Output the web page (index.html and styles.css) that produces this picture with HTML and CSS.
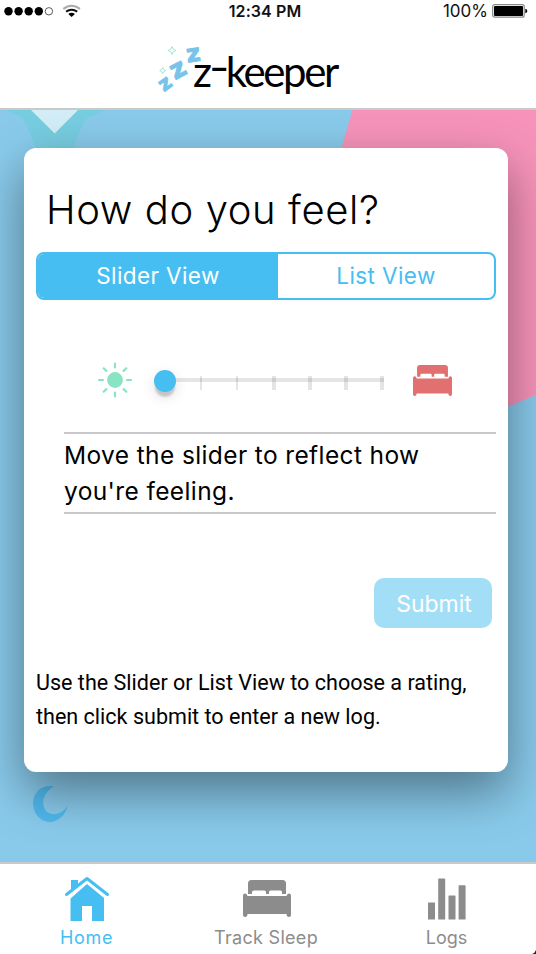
FILE: index.html
```html
<!DOCTYPE html>
<html lang="en">
<head>
<meta charset="utf-8">
<title>z-keeper</title>
<link rel="stylesheet" href="styles.css">
</head>
<body>
<div class="app">
  <header class="header">
    <div class="status">
      <svg class="signal" width="84" height="22" viewBox="0 0 84 22">
        <circle cx="8.5" cy="11.3" r="4.2"/><circle cx="18.6" cy="11.3" r="4.2"/><circle cx="28.7" cy="11.3" r="4.2"/><circle cx="38.8" cy="11.3" r="4.2"/>
        <circle cx="48.9" cy="11.3" r="3.7" fill="#fff" stroke="#333" stroke-width=".8"/>
        <g fill="none" stroke-width="2.1">
          <path d="M63.3 8.8Q71.6 2.8 80 8.8" stroke="#aaa"/>
          <path d="M66.1 11.7Q71.6 7.9 77.2 11.7" stroke="#111"/>
        </g>
        <path d="M68.3 13.9Q71.6 11.7 74.9 13.9L71.6 17Z"/>
      </svg>
      <span class="clock">12:34 PM</span>
      <span class="battery">100%
        <svg width="36" height="14" viewBox="0 0 36 14"><rect x=".7" y=".7" width="31.5" height="12.5" rx="2" fill="#fff" stroke="#888" stroke-width="1.2"/><rect x="2" y="2" width="29" height="10" rx="1"/><path d="M33.3 4.7Q35.3 5 35.3 7Q35.3 9 33.3 9.3Z"/></svg>
      </span>
    </div>
    <div class="brand">
      <svg width="44" height="50" viewBox="0 0 44 50">
        <g class="zs">
          <text transform="translate(7 50) rotate(-36)" font-size="20">z</text>
          <text transform="translate(18 38) rotate(-28)" font-size="26">z</text>
          <text transform="translate(30.500 20.500) rotate(-9)" font-size="24">z</text>
        </g>
        <g fill="none" stroke="#9ee8d4" stroke-width="1">
          <path d="M15 4.5Q15.5 8 19 8.5Q15.500 9 15 12.500Q14.500 9 11 8.500Q14.500 8 15 4.500Z"/>
          <path d="M5.700 25.500Q6.200 28 8.700 28.500Q6.200 29 5.700 31.500Q5.200 29 2.700 28.500Q5.200 28 5.700 25.500Z"/>
        </g>
      </svg>
      <span class="name">z<span class="dash">-</span>keeper</span>
    </div>
  </header>

  <main class="main">
    <svg class="scene" width="536" height="752" viewBox="0 0 536 752">
      <path d="M5 0L23 8Q30 22 37 42H73Q78 20 87 8L105 0Z" fill="#77cde0"/>
      <path d="M31 0H78L54.700 23.500Z" fill="#d3edf7"/>
      <path d="M352.500 0H536V285L508 296.500L300 240L341.500 38Z" fill="#f793ba"/>
      <path d="M54 676.500C41 674 33 683 33 694C34 706 42 712 51 712C60 711 66 703 67.500 696C61 705 53 706 47 702C40 695 43 682 54 676.500Z" fill="#4fb8ee"/>
    </svg>
    <section class="card">
      <h1>How do you feel?</h1>
      <div class="segment">
        <button class="tab tab-on">Slider View</button>
        <button class="tab">List View</button>
      </div>
      <div class="slider">
        <svg width="34" height="36" viewBox="-17 -18 34 36" stroke="#89e4c3" stroke-width="2.200" stroke-linecap="round">
          <circle r="7.900" fill="#89e4c3" stroke="none"/>
          <path d="M0-16.500V-12.500M0 12.500V16.500M-16-0H-12M12 0H16M-11.300-11.700L-8.700-9.100M11.300-11.700L8.700-9.100M-11.300 11.700L-8.700 9.100M11.300 11.700L8.700 9.100"/>
        </svg>
        <div class="range">
          <svg width="232" height="40" viewBox="0 0 232 40">
            <path d="M12 18H231V22H12Z" fill="#e5e5e5"/>
            <path d="M47 16h2v14h-2zM83 16h2v14h-2zM119 16h4v14h-4zM155 16h4v14h-4zM191 16h4v14h-4zM227 16h4v14h-4z" fill="#000" fill-opacity=".1"/>
          </svg>
          <span class="knob"></span>
        </div>
        <svg class="bed" width="39" height="31" viewBox="0 0 48 37" preserveAspectRatio="none"><use href="#bed"/></svg>
      </div>
      <p class="message">Move the slider to reflect how you're feeling.</p>
      <button class="submit">Submit</button>
      <p class="hint">Use the Slider or List View to choose a rating,<br>then click submit to enter a new log.</p>
    </section>
  </main>

  <nav class="nav">
    <a class="item item-on">
      <svg width="46" height="46" viewBox="0 0 46 46">
        <path d="M7 5H14V10L7 16ZM6.500 23.500L23 9L40 23V46H28V31H18V46H6.500Z" fill="currentColor"/>
        <path d="M2.500 21.500L23 6L43.500 21.500" fill="none" stroke="#fff" stroke-width="3"/>
        <path d="M2.500 19.500L23 3.500L43.500 19.500" fill="none" stroke="currentColor" stroke-width="3" stroke-linecap="round" stroke-linejoin="round"/>
      </svg>
      <span class="home">Home</span>
    </a>
    <a class="item">
      <svg width="48" height="46" viewBox="0 -5 48 46">
        <g id="bed" fill="currentColor">
          <path d="M5 14V3.500Q5 0 8.500 0H39.500Q43 0 43 3.500V14H39V12Q39 10.500 37.500 10.500H27.500Q26 10.500 26 12V14H23V12Q23 10.500 21.500 10.500H11Q9 10.500 9 12V14Z"/>
          <path d="M0 15.500Q0 13.500 2 13.500Q4 13.500 4.500 16H43.500Q44 13.500 46 13.500Q48 13.500 48 15.500V35Q48 37 46 37Q43.500 37 43.500 34H4.500Q4.500 37 2 37Q0 37 0 35Z"/>
        </g>
      </svg>
      <span class="sleep">Track Sleep</span>
    </a>
    <a class="item">
      <svg width="38" height="46" viewBox="0 0 38 46" fill="currentColor">
        <rect x="0" y="27.500" width="7" height="17" rx=".6"/><rect x="10.200" y="3.500" width="7" height="41" rx=".6"/><rect x="20.500" y="20.500" width="7" height="24" rx=".6"/><rect x="30.600" y="10.300" width="7" height="34.200" rx=".6"/>
      </svg>
      <span class="logs">Logs</span>
    </a>
  </nav>
  <svg class="corner" width="4" height="4" viewBox="0 0 4 4"><path d="M4 0Q3 3 0 4H4Z" fill="#222"/></svg>
</div>
</body>
</html>
```
FILE: styles.css
```css
* { box-sizing: border-box; }
body { margin: 0; font-family: Inter, "Liberation Sans", sans-serif; color: #000; }
button { border: 0; background: none; padding: 0; margin: 0; font-family: inherit; }
.app { position: relative; width: 536px; height: 954px; overflow: hidden; display: flex; flex-direction: column; background: #fff; }
.header { height: 110px; border-bottom: 2px solid #c9c9c9; flex: none; }
.status { display: grid; grid-template-columns: 1fr auto 1fr; align-items: center; height: 22px; padding-right: 8px; font-size: 17px; color: #111; }
.clock { font-weight: 600; font-size: 16px; padding-left: 2px; letter-spacing: .1px; }
.battery { display: flex; align-items: center; justify-content: flex-end; gap: 4px; }
.brand { display: flex; padding: 20px 0 0 157px; }
.brand svg { flex: none; overflow: visible; }
.zs { font-family: "DejaVu Sans"; font-weight: 700; fill: #77c3e9; stroke: #77c3e9; stroke-width: 1; }
.name { font-family: Lato, sans-serif; font-size: 42px; line-height: 58px; margin-left: -8px; letter-spacing: -2.4px; white-space: nowrap; }
.dash { display: inline-block; margin: 0 1px 0 2px; transform: translate(-1px, -5px) scaleX(1.35); }
.main { position: relative; height: 752px; flex: none; background: #89caeb; padding: 38px 28px 0 24px; overflow: hidden; }
.scene { position: absolute; left: 0; top: 0; }
.card { position: relative; height: 624px; background: #fff; border-radius: 12px; box-shadow: 0 20px 50px rgba(0,0,0,.42); padding: 37px 12px 0; display: flex; flex-direction: column; }
h1 { margin: 0 0 17px 10px; font-size: 40px; font-weight: 300; line-height: 50px; letter-spacing: .6px; }
.segment { display: flex; height: 48px; border: 2px solid #46bef1; border-radius: 8px; overflow: hidden; }
.tab { flex: 1; color: #46bef1; font-size: 22.5px; letter-spacing: .4px; padding-bottom: 2px; }
.tab-on { flex: 0 0 240px; background: #46bef1; color: #fff; }
.slider { display: flex; align-items: center; height: 40px; margin: 60px 0 0 62px; }
.range { position: relative; width: 232px; height: 40px; margin-left: 21px; }
.knob { position: absolute; left: 1px; top: 10px; width: 22px; height: 22px; border-radius: 50%; background: #46bef1; box-shadow: 0 6px 2px -1px rgba(0,0,0,.17), 0 5px 14px rgba(0,0,0,.13); }
.bed { margin-left: 28px; color: #e27070; }
.message { margin: 32px 0 0 28px; height: 82px; border-top: 2px solid #c8c7cc; border-bottom: 2px solid #c8c7cc; padding-top: 3px; font-size: 24.5px; line-height: 36px; padding-right: 40px; letter-spacing: .38px; }
.submit { align-self: flex-end; width: 118px; height: 50px; margin: 64px 4px 0 0; padding: 2px 0 0 2px; border-radius: 10px; background: #a3def7; color: #fff; font-size: 23px; }
.hint { margin: 38px 0 0; font-family: Roboto, sans-serif; font-size: 21.55px; line-height: 34px; white-space: nowrap; }
.nav { display: grid; grid-template-columns: repeat(3, 180px); height: 92px; border-top: 2px solid #c9c9cc; padding-top: 11px; margin-left: -3px; }
.item { display: flex; flex-direction: column; align-items: center; color: #8c8c8c; font-size: 18px; line-height: 34px; letter-spacing: .3px; }
.home { letter-spacing: .7px; margin-left: -1px; }
.sleep { margin-left: -2px; }
.logs { margin-left: -1px; letter-spacing: 0; }
.item-on { color: #46bef1; }
.corner { position: absolute; right: 0; bottom: 0; }
```
